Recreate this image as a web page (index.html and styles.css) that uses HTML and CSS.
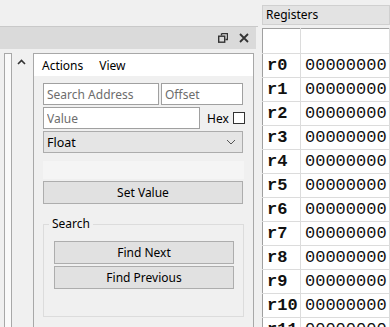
FILE: index.html
```html
<!DOCTYPE html>
<html lang="en">
<head>
    <meta charset="UTF-8">
    <meta name="viewport" content="width=device-width, initial-scale=1.0">
    <title>Debugger</title>
    <link rel="stylesheet" href="styles.css">
</head>
<body>
    <div class="app">
        <!-- Left dock with the memory tools -->
        <div class="dock">
            <div class="dock-top"></div>
            <div class="dock-title">
                <svg class="dock-icon" width="10" height="10" viewBox="0 0 10 10">
                    <path d="M3.5 0.5h6v6h-2M3.5 0.5v2" fill="none" stroke="#333" stroke-width="1.4"/>
                    <rect x="0.7" y="3.2" width="6" height="6" fill="none" stroke="#333" stroke-width="1.4"/>
                </svg>
                <svg class="dock-icon" width="10" height="10" viewBox="0 0 10 10">
                    <path d="M1 1l8 8M9 1l-8 8" stroke="#333" stroke-width="1.8"/>
                </svg>
            </div>
            <div class="dock-body">
                <div class="side-pane">
                    <div class="side-strip"></div>
                    <div class="scrollbar">
                        <svg width="9" height="6" viewBox="0 0 9 6">
                            <path d="M1 5l3.5-3.5L8 5" fill="none" stroke="#333" stroke-width="1.6"/>
                        </svg>
                    </div>
                </div>
                <div class="tool-pane">
                    <div class="menubar">
                        <span>Actions</span>
                        <span>View</span>
                    </div>
                    <div class="tool-form">
                        <div class="row">
                            <input class="field field-address" type="text" placeholder="Search Address">
                            <input class="field field-offset" type="text" placeholder="Offset">
                        </div>
                        <div class="row">
                            <input class="field field-value" type="text" placeholder="Value">
                            <label class="hex">Hex <span class="check"></span></label>
                        </div>
                        <div class="select">
                            <span>Float</span>
                            <svg width="10" height="6" viewBox="0 0 10 6">
                                <path d="M1 1l4 4 4-4" fill="none" stroke="#555" stroke-width="1"/>
                            </svg>
                        </div>
                        <div class="status-line"></div>
                        <button class="btn">Set Value</button>
                        <fieldset class="group">
                            <legend>Search</legend>
                            <button class="btn">Find Next</button>
                            <button class="btn">Find Previous</button>
                        </fieldset>
                    </div>
                </div>
            </div>
        </div>

        <!-- Registers panel -->
        <div class="registers">
            <div class="reg-head">Registers</div>
            <table class="reg-table">
                <tr class="reg-blank"><td></td><td></td></tr>
                <tr><td class="reg-name">r0</td><td>00000000</td></tr>
                <tr><td class="reg-name">r1</td><td>00000000</td></tr>
                <tr><td class="reg-name">r2</td><td>00000000</td></tr>
                <tr><td class="reg-name">r3</td><td>00000000</td></tr>
                <tr><td class="reg-name">r4</td><td>00000000</td></tr>
                <tr><td class="reg-name">r5</td><td>00000000</td></tr>
                <tr><td class="reg-name">r6</td><td>00000000</td></tr>
                <tr><td class="reg-name">r7</td><td>00000000</td></tr>
                <tr><td class="reg-name">r8</td><td>00000000</td></tr>
                <tr><td class="reg-name">r9</td><td>00000000</td></tr>
                <tr><td class="reg-name">r10</td><td>00000000</td></tr>
                <tr><td class="reg-name">r11</td><td>00000000</td></tr>
            </table>
        </div>
    </div>
</body>
</html>
```

FILE: styles.css
```css
* {
    margin: 0;
    padding: 0;
    box-sizing: border-box;
}

body {
    font-family: "Noto Sans", "Open Sans", sans-serif;
    font-size: 12px;
    color: #000;
    background: #f0f0f0;
    overflow: hidden;
}

.app {
    display: flex;
    height: 327px;
}

/* dock */

.dock {
    width: 258px;
    display: flex;
    flex-direction: column;
}

.dock-top {
    height: 27px;
    border-bottom: 1px solid #c9c9c9;
}

.dock-title {
    height: 22px;
    width: 256px;
    background: #dadada;
    display: flex;
    align-items: center;
    justify-content: flex-end;
    gap: 11px;
    padding-right: 7px;
}

.dock-icon {
    display: block;
}

.dock-body {
    flex: 1;
    display: flex;
    padding-top: 4px;
}

.side-pane {
    width: 33px;
    display: flex;
    padding-left: 4px;
}

.side-strip {
    width: 8px;
    background: #fafafa;
    border: 1px solid #a8a8a8;
    border-bottom: none;
}

.scrollbar {
    flex: 1;
    display: flex;
    justify-content: center;
    padding-top: 6px;
    padding-right: 2px;
}

.scrollbar svg {
    display: block;
}

.tool-pane {
    width: 221px;
    border: 1px solid #a8a8a8;
    border-bottom: none;
    display: flex;
    flex-direction: column;
}

.menubar {
    height: 22px;
    background: #fff;
    display: flex;
    align-items: center;
    gap: 16px;
    padding-left: 8px;
}

.tool-form {
    padding: 7px 9px 0 9px;
    display: flex;
    flex-direction: column;
}

.row {
    display: flex;
    align-items: center;
    margin-bottom: 2px;
}

.field {
    height: 22px;
    border: 1px solid #a0a0a0;
    background: #fff;
    font-family: inherit;
    font-size: 12px;
    padding: 0 3px;
    outline: none;
}

.field::placeholder {
    color: #6d6d6d;
}

.field-address {
    width: 116px;
    margin-right: 2px;
}

.field-offset {
    width: 82px;
}

.field-value {
    width: 157px;
}

.hex {
    display: flex;
    align-items: center;
    gap: 4px;
    margin-left: 7px;
}

.check {
    width: 12px;
    height: 12px;
    border: 1px solid #333;
    background: #fff;
}

.select {
    height: 22px;
    width: 200px;
    background: #e5e5e5;
    border: 1px solid #acacac;
    display: flex;
    align-items: center;
    justify-content: space-between;
    padding: 0 6px 0 3px;
    font-size: 12.5px;
}

.status-line {
    height: 18px;
    margin: 8px 0 2px;
    background: #f5f5f5;
}

.btn {
    display: block;
    width: 200px;
    height: 23px;
    background: #e1e1e1;
    border: 1px solid #adadad;
    font-family: inherit;
    font-size: 12px;
    color: #000;
}

.group {
    width: 200px;
    margin-top: 14px;
    border: 1px solid #dcdcdc;
    padding: 11px 9px 25px 10px;
}

.group legend {
    padding: 0 3px;
    margin-left: -5px;
    line-height: 12px;
}

.group .btn {
    width: 180px;
    margin-bottom: 2px;
}

/* registers */

.registers {
    flex: 1;
    margin-left: 4px;
    padding-top: 5px;
    display: flex;
    flex-direction: column;
}

.reg-head {
    height: 20px;
    background: #e3e3e3;
    border: 1px solid #d0d0d0;
    padding-left: 3px;
    line-height: 18px;
}

.reg-table {
    margin-top: 3px;
    border-collapse: collapse;
    background: #fff;
    border-left: 1px solid #a0a0a0;
    border-top: 1px solid #a0a0a0;
    font-family: "Liberation Mono", monospace;
    font-size: 17px;
    color: #111;
}

.reg-table td {
    height: 24px;
    border-bottom: 1px solid #dcdcdc;
    border-right: 1px solid #dcdcdc;
    padding: 0 0 0 4px;
    white-space: nowrap;
}

.reg-table td.reg-name {
    width: 38px;
    font-weight: bold;
    padding-left: 4px;
}

.reg-table .reg-blank td {
    height: 25px;
}
```
